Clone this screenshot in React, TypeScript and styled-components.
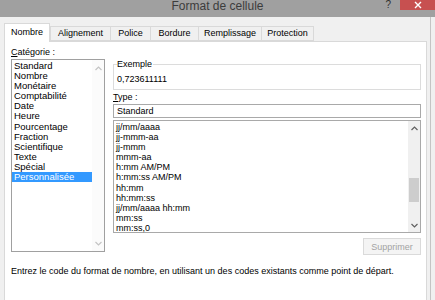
import React from "react";
import styled, { createGlobalStyle } from "styled-components";

const GlobalStyle = createGlobalStyle`
  html, body {
    margin: 0;
    padding: 0;
    background: #f0f0f0;
  }
  body {
    font-family: "Liberation Sans", Arial, sans-serif;
    color: #000;
  }
`;

const categories = [
  "Standard",
  "Nombre",
  "Monétaire",
  "Comptabilité",
  "Date",
  "Heure",
  "Pourcentage",
  "Fraction",
  "Scientifique",
  "Texte",
  "Spécial",
  "Personnalisée",
];

const formats = [
  "jj/mm/aaaa",
  "jj-mmm-aa",
  "jj-mmm",
  "mmm-aa",
  "h:mm AM/PM",
  "h:mm:ss AM/PM",
  "hh:mm",
  "hh:mm:ss",
  "jj/mm/aaaa hh:mm",
  "mm:ss",
  "mm:ss,0",
];

const tabs = [
  { label: "Nombre", width: 46 },
  { label: "Alignement", width: 61 },
  { label: "Police", width: 41 },
  { label: "Bordure", width: 49 },
  { label: "Remplissage", width: 64 },
  { label: "Protection", width: 53 },
];

const Chevron = ({ up, color }: { up?: boolean; color: string }) => (
  <svg width="7" height="5" viewBox="0 0 7 5">
    <polyline
      points={up ? "0.5,4 3.5,1 6.5,4" : "0.5,1 3.5,4 6.5,1"}
      fill="none"
      stroke={color}
      strokeWidth="1.2"
    />
  </svg>
);

const App = () => {
  return (
    <>
      <GlobalStyle />
      <Window>
        <TitleBar>
          <span />
          <Title>Format de cellule</Title>
          <Controls>
            <Help>?</Help>
            <CloseButton>
              <svg width="8" height="8" viewBox="0 0 8 8">
                <path d="M1 1L7 7M7 1L1 7" stroke="#fff" strokeWidth="1.4" />
              </svg>
            </CloseButton>
          </Controls>
        </TitleBar>
        <Body>
          <TabRow>
            {tabs.map((t, i) => (
              <Tab key={t.label} $active={i === 0} $w={t.width}>
                {t.label}
              </Tab>
            ))}
          </TabRow>
          <Panel>
            <Columns>
              <LeftColumn>
                <Label>
                  <u>C</u>atégorie :
                </Label>
                <CategoryList>
                  <Items>
                    {categories.map((c, i) => (
                      <CategoryItem key={c} $selected={i === categories.length - 1}>
                        {c}
                      </CategoryItem>
                    ))}
                  </Items>
                  <ScrollBar $disabled>
                    <ScrollButton $h={16}>
                      <Chevron up color="#c4c4c4" />
                    </ScrollButton>
                    <Track />
                    <ScrollButton $h={16}>
                      <Chevron color="#c4c4c4" />
                    </ScrollButton>
                  </ScrollBar>
                </CategoryList>
              </LeftColumn>
              <RightColumn>
                <GroupBox>
                  <Legend>Exemple</Legend>
                  <SampleValue>0,723611111</SampleValue>
                </GroupBox>
                <TypeLabel>
                  <u>T</u>ype :
                </TypeLabel>
                <TypeInput>Standard</TypeInput>
                <FormatList>
                  <Items>
                    {formats.map((f) => (
                      <FormatItem key={f}>{f}</FormatItem>
                    ))}
                  </Items>
                  <ScrollBar>
                    <ScrollButton $h={14}>
                      <Chevron up color="#606060" />
                    </ScrollButton>
                    <Track>
                      <Thumb />
                    </Track>
                    <ScrollButton $h={14}>
                      <Chevron color="#606060" />
                    </ScrollButton>
                  </ScrollBar>
                </FormatList>
                <ButtonRow>
                  <DeleteButton disabled>Supprimer</DeleteButton>
                </ButtonRow>
              </RightColumn>
            </Columns>
            <Description>
              Entrez le code du format de nombre, en utilisant un des codes existants comme point de départ.
            </Description>
          </Panel>
        </Body>
      </Window>
    </>
  );
};

const Window = styled.div`
  width: 435px;
  height: 300px;
  overflow: hidden;
  display: flex;
  flex-direction: column;
  background: #f0f0f0;
`;

const TitleBar = styled.div`
  height: 17px;
  flex: none;
  background: #a0a0a0;
  display: grid;
  grid-template-columns: 50px 1fr 50px;
  align-items: start;
`;

const Title = styled.div`
  text-align: center;
  font-size: 12px;
  line-height: 13px;
  color: #3c3c3c;
`;

const Controls = styled.div`
  display: flex;
  justify-content: flex-end;
  align-items: flex-start;
`;

const Help = styled.span`
  font-size: 10px;
  line-height: 10px;
  color: #303030;
  margin-right: 9px;
`;

const CloseButton = styled.div`
  width: 35px;
  height: 10px;
  background: #c75050;
  display: flex;
  align-items: center;
  justify-content: center;
`;

const Body = styled.div`
  flex: 1;
  width: 431px;
  border-right: 1px solid #c4c4c4;
  padding: 6px 0 0 4px;
  box-sizing: border-box;
  display: flex;
  flex-direction: column;
`;

const TabRow = styled.div`
  display: flex;
  align-items: flex-end;
  height: 18px;
`;

const Tab = styled.div<{ $active?: boolean; $w: number }>`
  box-sizing: border-box;
  width: ${({ $w }) => $w}px;
  text-align: center;
  font-size: 9px;
  height: ${({ $active }) => ($active ? "19px" : "15px")};
  line-height: ${({ $active }) => ($active ? "16px" : "13px")};
  margin-bottom: ${({ $active }) => ($active ? "-1px" : "0")};
  margin-left: ${({ $active }) => ($active ? "0" : "-1px")};
  background: ${({ $active }) => ($active ? "#fff" : "#f0f0f0")};
  border: 1px solid #d9d9d9;
  border-bottom: ${({ $active }) => ($active ? "none" : "1px solid #d9d9d9")};
  position: relative;
  z-index: ${({ $active }) => ($active ? 1 : 0)};
  color: #000;
  &:nth-child(2) {
    margin-left: 0;
  }
`;

const Panel = styled.div`
  flex: 1;
  width: 423px;
  box-sizing: border-box;
  background: #fff;
  border: 1px solid #d9d9d9;
  border-bottom: none;
  padding: 5px 5px 0 6px;
`;

const Columns = styled.div`
  display: flex;
  gap: 8px;
  align-items: flex-start;
`;

const LeftColumn = styled.div`
  width: 94px;
  display: flex;
  flex-direction: column;
`;

const Label = styled.div`
  font-size: 9px;
  line-height: 11px;
  height: 11px;
`;

const ListBox = styled.div`
  box-sizing: border-box;
  border: 1px solid #a9a9a9;
  background: #fff;
  display: flex;
`;

const CategoryList = styled(ListBox)`
  margin-top: 1px;
  height: 193px;
  border-color: #a0a0a0;
`;

const Items = styled.div`
  flex: 1;
  padding-top: 1px;
  min-width: 0;
`;

const CategoryItem = styled.div<{ $selected?: boolean }>`
  font-size: 9.5px;
  line-height: 10.1px;
  height: 10.1px;
  padding-left: 2px;
  white-space: nowrap;
  background: ${({ $selected }) => ($selected ? "#3399ff" : "transparent")};
  color: ${({ $selected }) => ($selected ? "#fff" : "#000")};
`;

const ScrollBar = styled.div<{ $disabled?: boolean }>`
  width: 12px;
  display: flex;
  flex-direction: column;
  background: ${({ $disabled }) => ($disabled ? "#fbfbfb" : "#f0f0f0")};
`;

const ScrollButton = styled.div<{ $h: number }>`
  height: ${({ $h }) => $h}px;
  display: flex;
  align-items: center;
  justify-content: center;
`;

const Track = styled.div`
  flex: 1;
  display: flex;
  flex-direction: column;
  padding-top: 43px;
  box-sizing: border-box;
`;

const Thumb = styled.div`
  height: 24px;
  margin: 0 1px;
  background: #cdcdcd;
`;

const RightColumn = styled.div`
  width: 308px;
  display: flex;
  flex-direction: column;
`;

const GroupBox = styled.fieldset`
  margin: 12px 0 0 0;
  padding: 4px 3px 2px 3px;
  border: 1px solid #dcdcdc;
  min-width: 0;
  height: 31px;
  box-sizing: border-box;
`;

const Legend = styled.legend`
  font-size: 9px;
  line-height: 11px;
  padding: 0 1px 0 0;
  margin-left: 0;
`;

const SampleValue = styled.div`
  font-size: 9px;
  line-height: 11px;
`;

const TypeLabel = styled(Label)`
  margin-top: 2px;
`;

const TypeInput = styled.div`
  margin-top: 1px;
  height: 14px;
  box-sizing: border-box;
  border: 1px solid #a9a9a9;
  font-size: 9px;
  line-height: 12px;
  padding-left: 3px;
`;

const FormatList = styled(ListBox)`
  margin-top: 2px;
  height: 113px;
`;

const FormatItem = styled.div`
  font-size: 9px;
  line-height: 10.1px;
  height: 10.1px;
  padding-left: 2px;
  white-space: nowrap;
`;

const ButtonRow = styled.div`
  display: flex;
  justify-content: flex-end;
  margin-top: 5px;
`;

const DeleteButton = styled.button`
  width: 58px;
  height: 17px;
  box-sizing: border-box;
  padding: 0;
  background: #f4f4f4;
  border: 1px solid #dadada;
  color: #a3a3a3;
  font-family: "Liberation Sans", Arial, sans-serif;
  font-size: 9px;
`;

const Description = styled.div`
  margin-top: 11px;
  font-size: 9px;
  line-height: 11px;
  white-space: nowrap;
`;

export default App;
